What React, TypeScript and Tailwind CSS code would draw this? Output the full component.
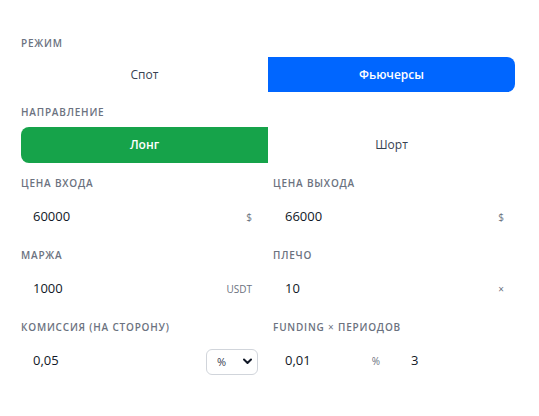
import { useState } from "react";

const font = { fontFamily: '"Open Sans", "Noto Sans", sans-serif' };

function Label({ children, className = "" }: { children: React.ReactNode; className?: string }) {
  return (
    <div
      className={
        "h-[14px] text-[10px] leading-[14px] font-semibold uppercase tracking-[0.08em] text-[#6b7280] " +
        className
      }
    >
      {children}
    </div>
  );
}

function Field({ value, suffix, className = "" }: { value: string; suffix?: string; className?: string }) {
  return (
    <div className={"flex items-center min-w-0 h-[38px] pl-3 pr-[11px] bg-white " + className}>
      <input
        defaultValue={value}
        className="flex-1 w-0 min-w-0 bg-transparent outline-none text-[13px] text-[#111827]"
      />
      {suffix && <span className="text-[10px] text-[#6b7280]">{suffix}</span>}
    </div>
  );
}

function Segment({
  left,
  right,
  active,
  activeBg,
  onPick,
}: {
  left: string;
  right: string;
  active: 0 | 1;
  activeBg: string;
  onPick: (i: 0 | 1) => void;
}) {
  const cls = (on: boolean) =>
    on ? activeBg + " text-white font-semibold" : "text-[#374151] font-medium";
  return (
    <div className="grid grid-cols-2 h-full">
      <button onClick={() => onPick(0)} className={"rounded-l-lg text-[12px] " + cls(active === 0)}>
        {left}
      </button>
      <button onClick={() => onPick(1)} className={"rounded-r-lg text-[12px] " + cls(active === 1)}>
        {right}
      </button>
    </div>
  );
}

export default function App() {
  const [mode, setMode] = useState<0 | 1>(1);
  const [side, setSide] = useState<0 | 1>(0);

  return (
    <div className="min-h-screen bg-white pt-[36px] px-[21px]" style={font}>
      <div className="w-[494px] flex flex-col">
        {/* режим */}
        <Label className="mb-[7px]">Режим</Label>
        <div className="h-[35px]">
          <Segment left="Спот" right="Фьючерсы" active={mode} activeBg="bg-[#0066ff]" onPick={setMode} />
        </div>

        {/* направление */}
        <Label className="mt-[13px] mb-2">Направление</Label>
        <div className="h-9">
          <Segment left="Лонг" right="Шорт" active={side} activeBg={side === 0 ? "bg-[#16a34a]" : "bg-[#dc2626]"} onPick={setSide} />
        </div>

        <div className="mt-[13px] grid grid-cols-2 gap-x-[10px] gap-y-3">
          <div>
            <Label className="mb-2">Цена входа</Label>
            <Field value="60000" suffix="$" />
          </div>
          <div>
            <Label className="mb-2">Цена выхода</Label>
            <Field value="66000" suffix="$" />
          </div>
          <div>
            <Label className="mb-2">Маржа</Label>
            <Field value="1000" suffix="USDT" />
          </div>
          <div>
            <Label className="mb-2">Плечо</Label>
            <Field value="10" suffix="×" />
          </div>
          <div>
            <Label className="mb-2">Комиссия (на сторону)</Label>
            <div className="flex items-center gap-2">
              <Field value="0,05" className="flex-1" />
              <div className="relative shrink-0 w-[52px] h-[26px] mr-[5px]">
                <select className="appearance-none w-full h-full rounded-md border border-[#d1d5db] bg-white pl-[10px] text-[11px] text-[#374151] outline-none">
                  <option>%</option>
                  <option>$</option>
                </select>
                <svg
                  className="absolute right-[6px] top-[10px] pointer-events-none"
                  width="9"
                  height="7"
                  viewBox="0 0 9 7"
                  fill="none"
                >
                  <path d="M1 1.5 4.5 5 8 1.5" stroke="#111827" strokeWidth="2" strokeLinecap="round" strokeLinejoin="round" />
                </svg>
              </div>
            </div>
          </div>
          <div>
            <Label className="mb-2">
              Funding <span className="font-normal">×</span> периодов
            </Label>
            <div className="flex items-center gap-2">
              <Field value="0,01" suffix="%" className="w-[118px] shrink-0" />
              <Field value="3" className="flex-1" />
            </div>
          </div>
        </div>
      </div>
    </div>
  );
}
